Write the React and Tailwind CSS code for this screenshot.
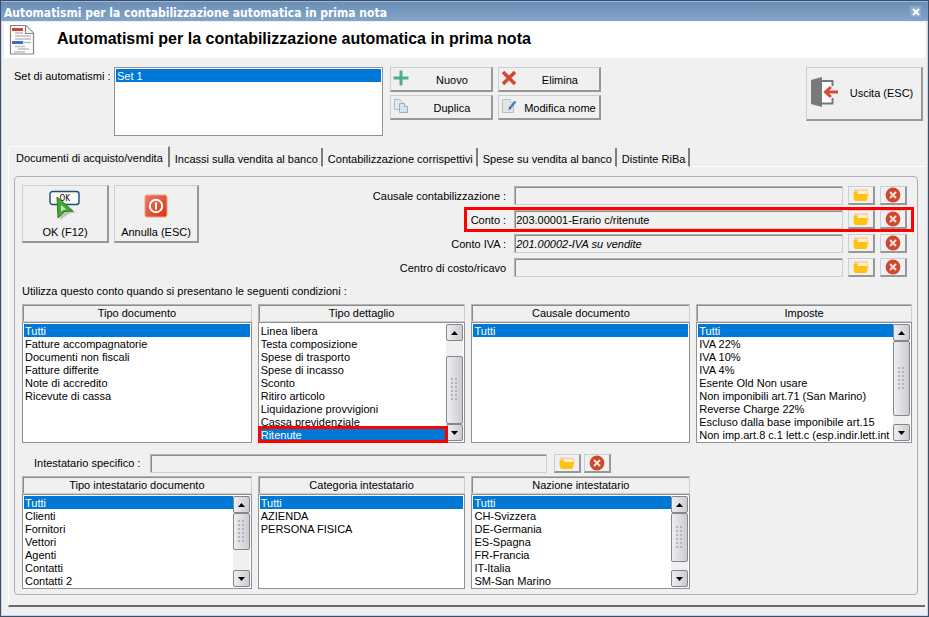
import React, { useState } from "react";

const tabs = [
  "Documenti di acquisto/vendita",
  "Incassi sulla vendita al banco",
  "Contabilizzazione corrispettivi",
  "Spese su vendita al banco",
  "Distinte RiBa"
];

const tipoDocumento = ["Tutti", "Fatture accompagnatorie", "Documenti non fiscali", "Fatture differite", "Note di accredito", "Ricevute di cassa"];
const tipoDettaglio = ["Linea libera", "Testa composizione", "Spese di trasporto", "Spese di incasso", "Sconto", "Ritiro articolo", "Liquidazione provvigioni", "Cassa previdenziale", "Ritenute"];
const imposte = ["Tutti", "IVA 22%", "IVA 10%", "IVA 4%", "Esente Old Non usare", "Non imponibili art.71 (San Marino)", "Reverse Charge 22%", "Escluso dalla base imponibile art.15", "Non imp.art.8 c.1 lett.c (esp.indir.lett.int"];
const tipoIntestatario = ["Tutti", "Clienti", "Fornitori", "Vettori", "Agenti", "Contatti", "Contatti 2"];
const nazioni = ["Tutti", "CH-Svizzera", "DE-Germania", "ES-Spagna", "FR-Francia", "IT-Italia", "SM-San Marino"];

const raised = "border-t border-l border-r-2 border-b-2 border-t-[#cdcdd6] border-l-[#cdcdd6] border-r-[#979797] border-b-[#979797] bg-[#f0f0f0]";
const sunken = "border border-t-[#b4b4b4] border-l-[#b4b4b4] border-r-[#cdcdd6] border-b-[#cdcdd6] bg-[#f0f0f0] shadow-[inset_1px_1px_0_#8c8c8c]";
const columns = "grid grid-cols-[230fr_208fr_219fr_216fr] gap-x-[6px]";

/* ICONS */
const DocumentIcon = () => (
  <svg width="26" height="32" viewBox="0 0 26 32">
    <path d="M1.500 1.500h15.500l7.500 7.500v21h-23z" fill="#fff" stroke="#858585" strokeWidth="1.200" />
    <path d="M16.500 1.500v8h8" fill="#f4f4f4" stroke="#858585" strokeWidth="1.200" />
    <path d="M3 5.500h11" stroke="#d0452b" strokeWidth="3" />
    <path d="M6 9h8M6 12h16M6 15h16M6 22.500h10M9 25h11M5 28h11" stroke="#bdbdbd" strokeWidth="1.500" />
    <path d="M3 18.500h11" stroke="#3d72b8" strokeWidth="3" />
    <path d="M14 18.500h8" stroke="#bdbdbd" strokeWidth="1.500" />
  </svg>
);

const PlusIcon = () => (
  <svg width="16" height="16" viewBox="0 0 16 16">
    <path d="M8 .5v15M.5 8h15" stroke="#4caf87" strokeWidth="3" />
  </svg>
);

const CrossIcon = () => (
  <svg width="16" height="16" viewBox="0 0 16 16">
    <path d="M2 2l12 12M14 2L2 14" stroke="#d2492f" strokeWidth="3.600" />
  </svg>
);

const CopyIcon = () => (
  <svg width="16" height="16" viewBox="0 0 16 16">
    <path d="M1.500 1.500h5l3 3v7h-8z" fill="#dcebf7" stroke="#b5bac0" />
    <path d="M6.500 5.500h5l3 3v6h-8z" fill="#cfe3f5" stroke="#a4abb3" />
    <path d="M11.500 5.500v3h3" fill="#fff" stroke="#a4abb3" />
  </svg>
);

const RenameIcon = () => (
  <svg width="16" height="16" viewBox="0 0 16 16">
    <path d="M1.500 1.500h8l3 3v10h-11z" fill="#e4e6e6" stroke="#bcbcbc" />
    <path d="M9.500 1.500v3h3" fill="#fff" stroke="#c4c4c4" />
    <path d="M14.500 3.500L8.500 10.500" stroke="#4a7fc0" strokeWidth="2.400" />
    <path d="M8.600 9.200l-1.400 3 2.800-1.500z" fill="#4c5a6c" />
  </svg>
);

const ExitIcon = () => (
  <svg width="28" height="30" viewBox="0 0 28 30">
    <path d="M10 4h11v22h-11z" fill="#fff" />
    <path d="M11 4h10.500v5M21.500 21v5.500h-10.500" fill="none" stroke="#777" strokeWidth="2" />
    <path d="M0 3l11-3v30l-11-3z" fill="#7a7a7a" />
    <path d="M27 15h-12M20 10l-5.500 5 5.500 5" fill="none" stroke="#d64c30" strokeWidth="3" />
  </svg>
);

const OkIcon = () => (
  <svg width="32" height="32" viewBox="0 0 32 32">
    <rect x="1" y="1.500" width="29" height="13" rx="2.500" fill="#f9f9f6" stroke="#194b7c" strokeWidth="1.400" />
    <text x="10.500" y="11" fontSize="8" fontFamily="DejaVu Sans Condensed, sans-serif" fill="#000">OK</text>
    <path d="M11 11l16 11.500-7 1-9 6.500z" fill="#8d8d8d" opacity="0.500" />
    <path d="M8 7l16 14-8.500.5-6.500 6.500z" fill="#43a82d" stroke="#2c7d1e" />
    <path d="M12 15l5.500 4.500-3 .2-2.500 2.300z" fill="#bfe6b0" />
  </svg>
);

const PowerIcon = () => (
  <svg width="24" height="24" viewBox="0 0 24 24">
    <defs>
      <linearGradient id="power" x1="0" y1="0" x2="1" y2="1">
        <stop offset="0" stopColor="#ee7a62" />
        <stop offset="1" stopColor="#d9330c" />
      </linearGradient>
    </defs>
    <rect x="1" y="1" width="22" height="22" rx="2" fill="url(#power)" stroke="#e9a090" />
    <circle cx="12" cy="12" r="6.200" fill="none" stroke="#fff" strokeWidth="2" />
    <path d="M12 8.500v7" stroke="#fff" strokeWidth="2" />
  </svg>
);

const FolderIcon = () => (
  <svg width="16" height="13" viewBox="0 0 16 13">
    <path d="M1 6V1.500q0-1 1-1h12q1 0 1 1V6z" fill="#fccb92" />
    <path d="M5 1.800h9v3.200h-9z" fill="#fff0cc" />
    <path d="M.5 3h2.500q1 2 3 2h9l-.8 5q-.4 2-2.200 2h-9q-1.800 0-2.200-2z" fill="#ffc20e" />
  </svg>
);

const ClearIcon = () => (
  <svg width="16" height="16" viewBox="0 0 16 16">
    <circle cx="8" cy="8" r="7.400" fill="#d0472f" />
    <path d="M5 5l6 6M11 5l-6 6" stroke="#f6e4e0" strokeWidth="2" />
  </svg>
);

const Arrow = ({ down }) => (
  <svg width="7" height="4" viewBox="0 0 7 4">
    <path d={down ? "M0 0h7l-3.500 4z" : "M0 4h7l-3.500-4z"} fill="#000" />
  </svg>
);

const ToolButton = ({ icon, label }) => (
  <button type="button" className={`${raised} flex h-[25px] w-[103px] items-start pl-[2px]`}>
    <span className="pt-[2px]">{icon}</span>
    <span className="flex-1 pt-[6px] pl-[3px] whitespace-nowrap text-center">{label}</span>
  </button>
);

const PickButtons = ({ label, gap }) => (
  <div className={`flex ${gap}`}>
    <button type="button" aria-label={`Scegli ${label}`} className={`${raised} flex h-[19px] w-[27px] items-center justify-center`}>
      <FolderIcon />
    </button>
    <button type="button" aria-label={`Cancella ${label}`} className={`${raised} flex h-[19px] w-[27px] items-center justify-center`}>
      <ClearIcon />
    </button>
  </div>
);

const AccountField = ({ id, label, value = "", italic, marked }) => (
  <div className="relative flex items-center">
    <label htmlFor={id} className="pt-[2px] pr-2 whitespace-nowrap">{label}</label>
    <input
      id={id}
      readOnly
      value={value}
      className={`${sunken} mr-[5px] h-[19px] w-[35.4vw] pl-px outline-none ${italic ? "italic" : ""}`}
    />
    <PickButtons label={label} gap="gap-[5px]" />
    {marked && <div className="pointer-events-none absolute -inset-x-[7px] -inset-y-[3px] border-3 border-[#fe0000]" />}
  </div>
);

const scrollPart = "flex w-[17px] items-center justify-center rounded-[2px] border border-[#85858a] bg-linear-to-r from-[#eeeef1] to-[#cbccd3]";

// before / thumb / after are the proportions of the track
const ScrollBar = ({ before, thumb, after }) => (
  <div className="flex w-[17px] shrink-0 flex-col bg-[#f0f0f0]">
    <button type="button" aria-label="Su" className={`${scrollPart} h-[17px] shrink-0`}><Arrow /></button>
    <div className="basis-0" style={{ flexGrow: before }} />
    <div className={`${scrollPart} min-h-0 basis-0`} style={{ flexGrow: thumb }}>
      <svg width="7" height="23" viewBox="0 0 7 23">
        {[0, 4, 8, 12, 16, 20].map(y => (
          <path key={y} d={`M0 ${y + 1}h2M4 ${y + 1}h2`} stroke="#b4b5bb" strokeWidth="2" />
        ))}
      </svg>
    </div>
    <div className="basis-0" style={{ flexGrow: after }} />
    <button type="button" aria-label="Giù" className={`${scrollPart} h-[17px] shrink-0`}><Arrow down /></button>
  </div>
);

const ListBox = ({ label, items, initial, scroll, marked, height }) => {
  const [selected, setSelected] = useState(initial || items[0]);

  return (
    <div className={`${height} flex border border-[#919191] bg-white p-px`}>
      <ul role="listbox" aria-label={label} className="min-w-0 flex-1">
        {items.map(item => (
          <li
            key={item}
            role="option"
            aria-selected={item === selected}
            onClick={() => setSelected(item)}
            className={`relative h-[13px] cursor-default pl-px leading-[15px] ${item === selected ? "bg-[#0078d7] text-white" : ""}`}
          >
            <span className="block overflow-hidden whitespace-nowrap">{item}</span>
            {item === marked && <div className="pointer-events-none absolute -inset-[2px] border-3 border-[#fe0000]" />}
          </li>
        ))}
      </ul>
      {scroll && <ScrollBar {...scroll} />}
    </div>
  );
};

const ListColumn = ({ title, ...rest }) => (
  <div className="min-w-0">
    <div className={`${sunken} h-[18px] text-center leading-[17px]`}>{title}</div>
    <ListBox label={title} {...rest} />
  </div>
);

const App = () => {
  const [activeTab, setActiveTab] = useState(tabs[0]);

  return (
    <div className="flex min-h-screen flex-col border border-[#3b4f6c] bg-[#f0f0f0] font-['Liberation_Sans',Arial,sans-serif] text-[11px] leading-[13px] text-black">

      {/* TITLE BAR */}
      <div className="flex h-[20px] items-center justify-between border-t border-[#9db7d3] bg-linear-to-b from-[#6b8fb7] to-[#84a4c9] pr-[7px] pl-[3px] text-white">
        <span className="pt-[4px] font-['DejaVu_Sans_Condensed','DejaVu_Sans',sans-serif] text-[12px] font-bold">
          Automatismi per la contabilizzazione automatica in prima nota
        </span>
        <button type="button" aria-label="Chiudi" className="flex h-[11px] w-[11px] items-center justify-center bg-[#8eabcc]">
          <svg width="8" height="8" viewBox="0 0 8 8">
            <path d="M1 1l6 6M7 1L1 7" stroke="#fff" strokeWidth="2.200" />
          </svg>
        </button>
      </div>

      <div className="flex grow flex-col border-x border-b border-[#cbd5e4] px-[2px]">
        <header className="mt-px flex h-[36px] items-center bg-white pl-[5px]">
          <DocumentIcon />
          <h1 className="pb-[2px] pl-[22px] text-[16px] leading-[20px] font-bold">
            Automatismi per la contabilizzazione automatica in prima nota
          </h1>
        </header>

        {/* SETS */}
        <section className="flex items-start pt-[9px] pl-[10px]">
          <span className="w-[100px] pt-[3px] whitespace-nowrap">Set di automatismi :</span>
          <div className="w-[29vw]">
            <ListBox label="Set di automatismi" items={["Set 1"]} height="h-[69px]" />
          </div>
          <div className="ml-[7px] grid grid-cols-2 gap-x-[5px] gap-y-[3px]">
            <ToolButton icon={<PlusIcon />} label="Nuovo" />
            <ToolButton icon={<CrossIcon />} label="Elimina" />
            <ToolButton icon={<CopyIcon />} label="Duplica" />
            <ToolButton icon={<RenameIcon />} label="Modifica nome" />
          </div>
          <button type="button" className={`${raised} mr-[2px] ml-auto flex h-[54px] w-[117px] items-center pb-[3px] pl-[4px]`}>
            <ExitIcon />
            <span className="flex-1 pt-[2px] pl-[3px] whitespace-nowrap">Uscita (ESC)</span>
          </button>
        </section>

        {/* TABS */}
        <div role="tablist" className="mt-[10px] flex items-end pl-[4px]">
          {tabs.map(tab => (
            <button
              key={tab}
              type="button"
              role="tab"
              aria-selected={tab === activeTab}
              onClick={() => setActiveTab(tab)}
              className={
                tab === activeTab
                  ? "h-[21px] rounded-tl-[3px] border-t border-r-2 border-l border-t-white border-r-[#7d7d7d] border-l-white pt-[2px] pr-[5px] pl-[7px] whitespace-nowrap"
                  : "h-[19px] border-r-2 border-b border-r-[#7d7d7d] border-b-white pt-[4px] pr-[3px] pl-[5px] whitespace-nowrap"
              }
            >
              {tab}
            </button>
          ))}
          <div className="flex-1 self-stretch border-b border-white" />
        </div>

        {/* PANEL */}
        <main className="ml-[4px] flex-1 border-b-2 border-l border-b-[#6b6b6b] border-l-white pt-[9px] pr-[7px] pb-[10px] pl-[5px]">
          <div className="rounded-[4px] border border-[#b0b0b0] pt-[8px] pr-[5px] pb-[5px] pl-[7px]">
            <div className="flex items-start justify-between">
              <div className="flex gap-[5px]">
                <button type="button" className={`${raised} flex h-[58px] w-[87px] flex-col items-center justify-between pt-[4px] pb-[2px]`}>
                  <OkIcon />
                  OK (F12)
                </button>
                <button type="button" className={`${raised} flex h-[58px] w-[85px] flex-col items-center justify-between pt-[8px] pb-[2px]`}>
                  <PowerIcon />
                  Annulla (ESC)
                </button>
              </div>
              <div className="flex flex-col items-end gap-[5px] pt-px pr-[5px]">
                <AccountField id="causale" label="Causale contabilizzazione :" />
                <AccountField id="conto" label="Conto :" value="203.00001-Erario c/ritenute" marked />
                <AccountField id="conto-iva" label="Conto IVA :" value="201.00002-IVA su vendite" italic />
                <AccountField id="centro" label="Centro di costo/ricavo" />
              </div>
            </div>

            <p className="mt-[8px] mb-[6px]">Utilizza questo conto quando si presentano le seguenti condizioni :</p>

            <div className={columns}>
              <ListColumn title="Tipo documento" items={tipoDocumento} height="h-[121px]" />
              <ListColumn
                title="Tipo dettaglio"
                items={tipoDettaglio}
                initial="Ritenute"
                marked="Ritenute"
                scroll={{ before: 15, thumb: 68, after: 0 }}
                height="h-[121px]"
              />
              <ListColumn title="Causale documento" items={["Tutti"]} height="h-[121px]" />
              <ListColumn title="Imposte" items={imposte} scroll={{ before: 0, thumb: 75, after: 8 }} height="h-[121px]" />
            </div>

            <div className="flex items-center pt-[11px] pb-[3px] pl-[12px]">
              <label htmlFor="intestatario" className="pr-[10px] whitespace-nowrap">Intestatario specifico :</label>
              <input id="intestatario" readOnly value="" className={`${sunken} mr-[7px] h-[19px] w-[42.7vw] outline-none`} />
              <PickButtons label="intestatario" gap="gap-[3px]" />
            </div>

            <div className={columns}>
              <ListColumn
                title="Tipo intestatario documento"
                items={tipoIntestatario}
                scroll={{ before: 0, thumb: 36, after: 21 }}
                height="h-[95px]"
              />
              <ListColumn title="Categoria intestatario" items={["Tutti", "AZIENDA", "PERSONA FISICA"]} height="h-[95px]" />
              <ListColumn title="Nazione intestatario" items={nazioni} scroll={{ before: 0, thumb: 49, after: 8 }} height="h-[95px]" />
            </div>
          </div>
        </main>
        <div className="h-[8px]" />
      </div>
    </div>
  );
};

export default App;
